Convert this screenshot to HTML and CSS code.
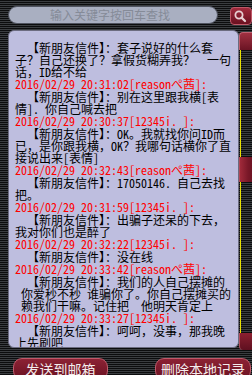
FILE: index.html
```html
<!DOCTYPE html>
<html lang="zh-CN">
<head>
<meta charset="utf-8">
<title>新朋友信件</title>
<link rel="stylesheet" href="styles.css">
</head>
<body>
<div class="screen">
  <div class="top">
    <div class="search">输入关键字按回车查找</div>
    <div class="search-btn">
      <svg width="14" height="14" viewBox="0 0 14 14"><circle cx="6" cy="6" r="3.6" fill="none" stroke="#e8d0d4" stroke-width="1.8"/><path d="M8.6 8.6 L12 12" stroke="#e8d0d4" stroke-width="2.2" stroke-linecap="round"/></svg>
    </div>
  </div>
  <div class="main">
    <div class="panel">
      <div class="entry">
        <p class="body">【新朋友信件】：套子说好的什么套子？自己还换了？拿假货糊弄我？　一句话，ID给不给</p>
        <p class="ts">2016/02/29 20:31:02[reasonぺ茜]:</p>
      </div>
      <div class="entry">
        <p class="body">【新朋友信件】：别在这里跟我横[表情]. 你自己喊去把</p>
        <p class="ts">2016/02/29 20:30:37[12345i. ]:</p>
      </div>
      <div class="entry">
        <p class="body">【新朋友信件】：OK。我就找你问ID而已，是你跟我横，OK？我哪句话横你了直接说出来[表情]</p>
        <p class="ts">2016/02/29 20:32:43[reasonぺ茜]:</p>
      </div>
      <div class="entry">
        <p class="body">【新朋友信件】：17050146. 自己去找把。</p>
        <p class="ts">2016/02/29 20:31:59[12345i. ]:</p>
      </div>
      <div class="entry">
        <p class="body">【新朋友信件】：出骗子还呆的下去，我对你们也是醉了</p>
        <p class="ts">2016/02/29 20:32:22[12345i. ]:</p>
      </div>
      <div class="entry">
        <p class="body">【新朋友信件】：没在线</p>
        <p class="ts">2016/02/29 20:33:42[reasonぺ茜]:</p>
      </div>
      <div class="entry">
        <p class="body">【新朋友信件】：我们的人自己摆摊的<br>&nbsp;你爱秒不秒&nbsp;谁骗你了。你自己摆摊买的<br>&nbsp;赖我们干嘛。记住把　他明天肯定上</p>
        <p class="ts">2016/02/29 20:33:27[12345i. ]:</p>
      </div>
      <div class="entry">
        <p class="body">【新朋友信件】：呵呵，没事，那我晚上先刷吧</p>
      </div>
    </div>
    <div class="scrollbar">
      <div class="sb-btn sb-up"></div>
      <div class="sb-track">
        <div class="sb-thumb"></div>
      </div>
      <div class="sb-btn sb-down"></div>
    </div>
  </div>
  <div class="bottom">
    <div class="btn btn-send">发送到邮箱</div>
    <div class="btn btn-del">删除本地记录</div>
  </div>
</div>
</body>
</html>
```
FILE: styles.css
```css
html, body {
  margin: 0;
  padding: 0;
}
body {
  width: 252px;
  height: 375px;
  overflow: hidden;
  background: repeating-linear-gradient(to bottom, #0c0d0e 0px, #0c0d0e 1px, #3a3d40 1px, #3a3d40 2px);
  font-family: "Noto Sans Mono CJK SC", "Noto Sans CJK SC", sans-serif;
}
.screen {
  width: 252px;
  height: 375px;
  overflow: hidden;
  padding-top: 6px;
  box-sizing: border-box;
}
.top {
  display: flex;
  align-items: flex-start;
  padding-left: 8px;
  height: 18px;
}
.search {
  width: 215px;
  height: 18px;
  box-sizing: border-box;
  border: 1px solid #505460;
  border-radius: 9px;
  background: #a9afc1;
  color: #858b98;
  font-size: 12px;
  line-height: 16px;
  text-align: center;
  padding-right: 6px;
}
.search-btn {
  margin-left: 12px;
  margin-top: 1px;
  width: 22px;
  height: 18px;
  flex: none;
  box-sizing: border-box;
  border: 1px solid #c05868;
  border-radius: 4px;
  background: linear-gradient(to bottom, #a02a3c, #6a1020);
  display: flex;
  align-items: center;
  padding-left: 2px;
}
.main {
  display: flex;
  margin-top: 6px;
  height: 318px;
}
.panel {
  width: 231px;
  height: 318px;
  box-sizing: border-box;
  margin-left: 8px;
  border: 1px solid #6c6c80;
  border-radius: 6px;
  background: #bebedf;
  padding: 11px 7px 0 6px;
  overflow: hidden;
  flex: none;
}
.entry {
  margin-bottom: 1px;
}
.entry p {
  margin: 0;
  font-size: 12px;
  line-height: 12px;
  width: 216px;
}
.body {
  color: #000;
  text-indent: 12px;
}
.ts {
  color: #ff0000;
  white-space: nowrap;
}
.scrollbar {
  width: 13px;
  flex: none;
  display: flex;
  flex-direction: column;
  padding-top: 2px;
}
.sb-btn {
  width: 13px;
  height: 18px;
  flex: none;
  box-sizing: border-box;
  background: linear-gradient(135deg, #9c2a3c 0%, #7a1a2a 50%, #5a0e1c 100%);
}
.sb-up {
  border-radius: 4px 0 0 0;
  background: linear-gradient(to bottom, #a03040, #6a1424);
  border-top: 1px solid #c06070;
  border-left: 1px solid #c06070;
}
.sb-down {
  height: 17px;
  border-radius: 0 0 0 4px;
  background: linear-gradient(to bottom, #8c2030, #5e1020);
  border-left: 1px solid #b05060;
}
.sb-track {
  flex: none;
  height: 283px;
  margin-left: 1px;
  border-left: 1px solid #e8e000;
  display: flex;
  flex-direction: column;
}
.sb-thumb {
  margin-top: 107px;
  margin-left: -2px;
  width: 13px;
  height: 25px;
  background: linear-gradient(to right, #a02a3a, #7a1828 60%, #6a1222);
  border-left: 1px solid #b04858;
}
.bottom {
  display: flex;
  margin-top: 10px;
  padding-left: 13px;
}
.btn {
  height: 22px;
  box-sizing: border-box;
  border: 1px solid #c05a6a;
  border-radius: 9px;
  background: linear-gradient(to bottom, #8c2234, #6a1222);
  color: #f4ecec;
  font-family: "Noto Sans CJK SC", sans-serif;
  font-size: 14px;
  line-height: 20px;
  text-align: center;
  flex: none;
}
.btn-send {
  width: 95px;
}
.btn-del {
  width: 96px;
  margin-left: 47px;
}
```
